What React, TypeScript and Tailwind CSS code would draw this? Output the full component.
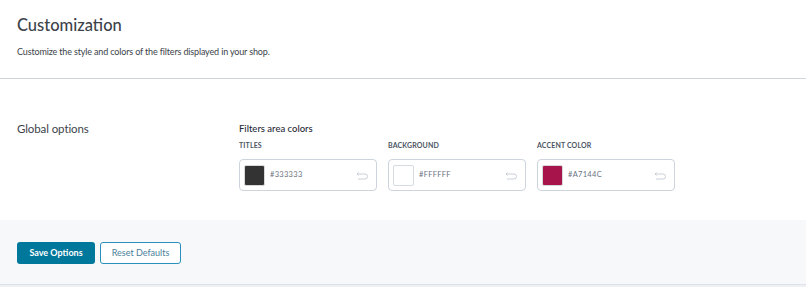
import React from "react";

function UndoIcon() {
  return (
    <svg width="12" height="9" viewBox="0 0 12 9" fill="none" stroke="#c9cfd8" strokeWidth="1">
      <path d="M2.5 1.5 L1 3 L2.5 4.5" />
      <path d="M1 3 H9 A2.5 2.5 0 0 1 9 8 H2" />
    </svg>
  );
}

function ColorField({ label, color, hex, border }: { label: string; color: string; hex: string; border?: boolean }) {
  return (
    <div className="flex flex-col w-[138px]">
      <div className="text-[7px] font-bold text-[#4b5563] tracking-[0.02em] leading-none h-[18px] pt-[1px]">{label}</div>
      <div className="h-[32px] rounded-[4px] border border-[#cdd4de] bg-white flex items-center pl-[4px] pr-[8px]">
        <div
          className={`w-[21px] h-[21px] rounded-[2px] ${border ? "border border-[#d6dbe2]" : "border border-[#d9d9d9]"}`}
          style={{ backgroundColor: color }}
        />
        <span className="ml-[5px] text-[7.5px] text-[#6b7280] tracking-[0.04em] flex-1">{hex}</span>
        <UndoIcon />
      </div>
    </div>
  );
}

export default function App() {
  return (
    <div className="w-[806px] h-[287px] bg-white overflow-hidden" style={{ fontFamily: 'Lato, "Noto Sans", sans-serif' }}>
      <div className="h-[79px] border-b border-[#cfd5dd] pl-[17px] pt-[14px]">
        <h1 className="text-[16.5px] font-medium text-[#3c434a] leading-[22px]">Customization</h1>
        <p className="mt-[10px] text-[9px] text-[#3c434a] leading-[12px] tracking-[-0.15px]">Customize the style and colors of the filters displayed in your shop.</p>
      </div>
      <div className="h-[141px] flex pl-[17px] pt-[42px]">
        <div className="w-[222px] text-[11.5px] text-[#3c434a] leading-[16px] tracking-[-0.1px]">Global options</div>
        <div className="flex flex-col">
          <div className="text-[9.5px] font-medium text-[#1f2937] leading-[14px] mt-[1px]">Filters area colors</div>
          <div className="flex gap-[11px] mt-[5px]">
            <ColorField label="TITLES" color="#333333" hex="#333333" />
            <ColorField label="BACKGROUND" color="#FFFFFF" hex="#FFFFFF" border />
            <ColorField label="ACCENT COLOR" color="#A7144C" hex="#A7144C" />
          </div>
        </div>
      </div>
      <div className="h-[65px] bg-[#f7f8fa] border-b border-[#dde2ea] flex items-center pl-[17px] gap-[5px] pt-[1px]">
        <button className="h-[22px] w-[78px] rounded-[3px] bg-[#00789b] text-white text-[9px] font-bold">Save Options</button>
        <button className="h-[22px] w-[81px] rounded-[3px] border border-[#2a8fbd] bg-white text-[#4a7f99] text-[9px]">Reset Defaults</button>
      </div>
      <div className="h-[2px] bg-[#eef0f4]" />
    </div>
  );
}
